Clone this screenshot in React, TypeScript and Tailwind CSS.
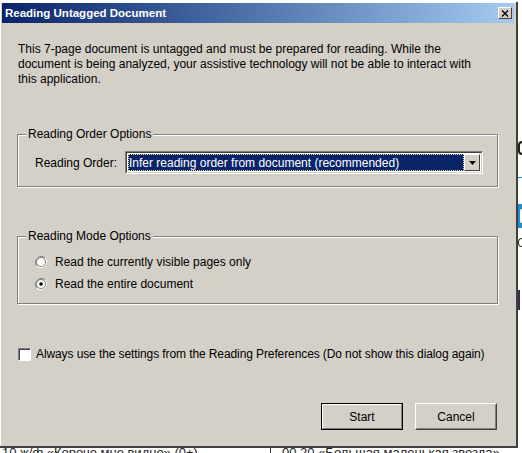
import React from 'react';

const font = { fontFamily: '"Liberation Sans", Arial, sans-serif' };

const GroupBox: React.FC<{ title: string; className?: string; children: React.ReactNode }> = ({ title, className, children }) => (
  <div className={`relative border border-[#808080] shadow-[inset_1px_1px_0_#ffffff,1px_1px_0_#ffffff] ${className ?? ''}`}>
    <span className="absolute -top-[9px] left-[8px] bg-[#d4d0c8] px-[2px] text-[12px] leading-[16px] text-black">{title}</span>
    {children}
  </div>
);

const Radio: React.FC<{ checked?: boolean }> = ({ checked }) => (
  <svg width="12" height="12" viewBox="0 0 12 12" className="shrink-0">
    <path d="M10.2 1.8 A6 6 0 0 0 1.8 10.2" fill="none" stroke="#808080" strokeWidth="1" />
    <path d="M1.8 10.2 A6 6 0 0 0 10.2 1.8" fill="none" stroke="#ffffff" strokeWidth="1" />
    <circle cx="6" cy="6" r="4.5" fill="#ffffff" stroke="#404040" strokeWidth="0.6" />
    {checked && <circle cx="6" cy="6" r="1.8" fill="#000000" />}
  </svg>
);

export default function App() {
  return (
    <div className="relative w-[522px] h-[453px] overflow-hidden bg-white" style={font}>
      {/* page behind the dialog, peeking out on the right and bottom */}
      <div className="absolute left-[518px] top-[141px] w-[4px] h-[14px] rounded-l-full border-[2px] border-r-0 border-[#222]" />
      <div className="absolute left-[518px] top-[177px] w-[6px] h-[1px] bg-[#1b8fd0]" />
      <div className="absolute left-[518px] top-[204px] w-[6px] h-[24px] bg-[#1b8fd0]" />
      <div className="absolute left-[520px] top-[209px] w-[2px] h-[14px] rounded-l-full bg-white" />
      <div className="absolute left-[518px] top-[238px] w-[4px] h-[9px] rounded-l-full border border-r-0 border-[#333]" />
      <div className="absolute left-[518px] top-[290px] w-[2px] h-[20px] bg-[#3a2a5a]" />
      <div className="absolute left-[2px] top-[445px] text-[13px] leading-[16px] text-[#222] whitespace-nowrap">10 ж/ф «Короче мне видно» (0+)</div>
      <div className="absolute left-[270px] top-[446px] w-[1px] h-[8px] bg-[#333]" />
      <div className="absolute left-[282px] top-[445px] text-[13px] leading-[16px] text-[#222] whitespace-nowrap">00.20 «Большая маленькая звезда»</div>

      {/* dialog window */}
      <div className="absolute left-0 top-[2px] w-[518px] h-[446px] bg-[#d4d0c8] border-r-[2px] border-b-[2px] border-[#404040] shadow-[inset_1px_1px_0_#ffffff] flex flex-col pl-[1px] pt-[1px]">
        <div className="h-[20px] mr-[2px] ml-[1px] flex items-center justify-between pl-[3px] pr-[2px] bg-gradient-to-r from-[#0a246a] to-[#a6caf0]">
          <span className="text-white font-bold text-[11.5px] leading-[14px]">Reading Untagged Document</span>
          <div className="w-[14px] h-[12px] bg-[#d4d0c8] border border-t-white border-l-white border-r-[#404040] border-b-[#404040] flex items-center justify-center">
            <svg width="8" height="7" viewBox="0 0 8 7">
              <path d="M1 0.5 L7 6.5 M7 0.5 L1 6.5" stroke="#000" strokeWidth="1.4" />
            </svg>
          </div>
        </div>

        <p className="mt-[19px] ml-[17px] w-[470px] text-[12px] leading-[15px] text-black">
          This 7-page document is untagged and must be prepared for reading. While the document is being analyzed, your assistive technology will not be able to interact with this application.
        </p>

        <GroupBox title="Reading Order Options" className="mt-[47px] ml-[16px] w-[481px] h-[53px]">
          <div className="flex items-center mt-[16px] ml-[17px]">
            <span className="text-[12px] leading-[16px] w-[90px] text-black">Reading Order:</span>
            <div className="w-[358px] h-[23px] bg-white border border-t-[#808080] border-l-[#808080] border-r-white border-b-white">
              <div className="h-full border border-t-[#404040] border-l-[#404040] border-r-[#d4d0c8] border-b-[#d4d0c8] flex items-center p-[1px]">
                <div className="flex-1 h-full bg-[#0a246a] outline outline-1 outline-dotted outline-[#f0e68c] -outline-offset-1 flex items-center pl-[1px]">
                  <span className="text-white text-[12px] leading-[14px] whitespace-nowrap">Infer reading order from document (recommended)</span>
                </div>
                <div className="w-[16px] h-full bg-[#d4d0c8] border border-t-white border-l-white border-r-[#404040] border-b-[#404040] flex items-center justify-center">
                  <svg width="7" height="4" viewBox="0 0 7 4">
                    <path d="M0 0 H7 L3.5 4 Z" fill="#000" />
                  </svg>
                </div>
              </div>
            </div>
          </div>
        </GroupBox>

        <GroupBox title="Reading Mode Options" className="mt-[49px] ml-[16px] w-[481px] h-[68px]">
          <div className="flex flex-col gap-[10px] mt-[19px] ml-[17px]">
            <label className="flex items-center gap-[8px] text-[12px] leading-[12px] text-black">
              <Radio />
              Read the currently visible pages only
            </label>
            <label className="flex items-center gap-[8px] text-[12px] leading-[12px] text-black">
              <Radio checked />
              Read the entire document
            </label>
          </div>
        </GroupBox>

        <label className="flex items-center gap-[5px] mt-[43px] ml-[17px] text-[12px] leading-[14px] tracking-[-0.1px] text-black">
          <span className="w-[13px] h-[13px] bg-white border border-t-[#808080] border-l-[#808080] border-r-white border-b-white shadow-[inset_1px_1px_0_#404040]" />
          Always use the settings from the Reading Preferences (Do not show this dialog again)
        </label>

        <div className="flex justify-end gap-[12px] mt-[42px] mr-[19px]">
          <button className="w-[82px] h-[27px] bg-[#d4d0c8] border border-black text-[12px] text-black">
            <div className="h-full border border-t-white border-l-white border-r-[#808080] border-b-[#808080] flex items-center justify-center">
              Start
            </div>
          </button>
          <button className="w-[82px] h-[27px] bg-[#d4d0c8] border border-t-white border-l-white border-r-[#404040] border-b-[#404040] text-[12px] text-black">
            <div className="h-full border border-transparent border-r-[#808080] border-b-[#808080] flex items-center justify-center">
              Cancel
            </div>
          </button>
        </div>
      </div>
    </div>
  );
}
